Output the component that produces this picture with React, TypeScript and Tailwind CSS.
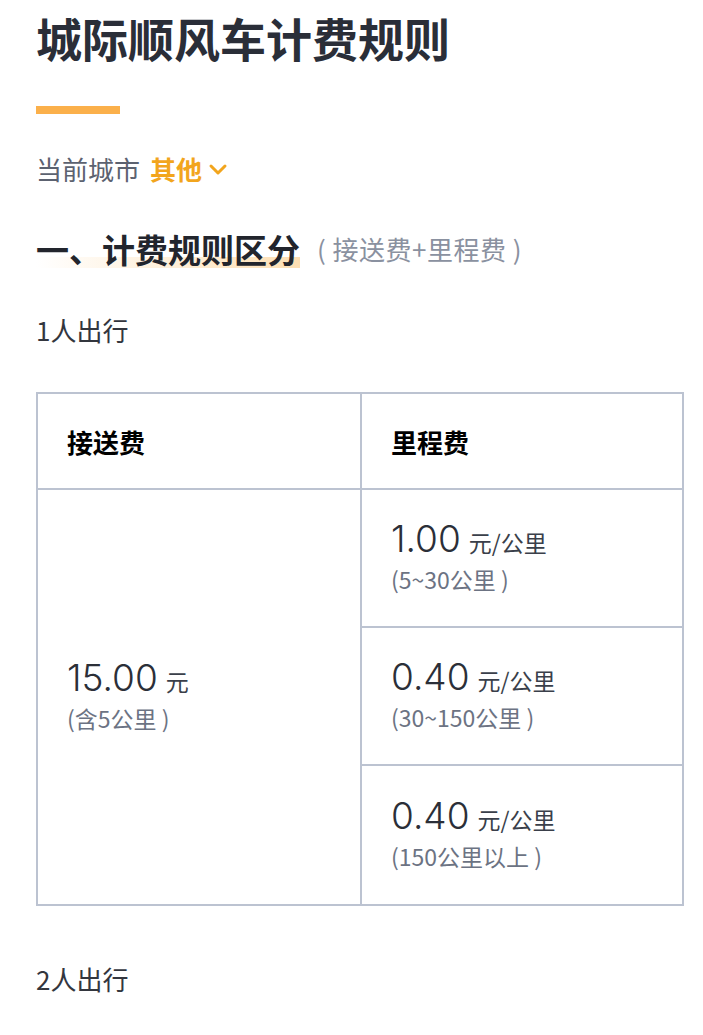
const FONT = '[font-family:"Noto_Sans_CJK_SC","Noto_Sans",sans-serif]';
const NUM = '[font-family:Inter,"Noto_Sans_CJK_SC",sans-serif]';

const MILEAGE = [
  { price: '1.00', range: '(5~30公里 )' },
  { price: '0.40', range: '(30~150公里 )' },
  { price: '0.40', range: '(150公里以上 )' },
];

function Price({ value, unit, note }: { value: string; unit: string; note: string }) {
  return (
    <div className="pb-[4px]">
      <div className="flex items-baseline">
        <span className={`${NUM} text-[37px] leading-[40px] font-light text-[#2b2f38]`}>{value}</span>
        <span className="ml-[8px] text-[23px] text-[#3a3f4a]">{unit}</span>
      </div>
      <div className="mt-[5px] text-[23px] leading-[28px] text-[#6c7383]">{note}</div>
    </div>
  );
}

export default function App() {
  return (
    <main className={`min-h-screen bg-white pl-[36px] pt-[9px] ${FONT}`}>
      <h1 className="text-[46px] leading-[56px] font-bold text-[#2a2e38]">城际顺风车计费规则</h1>
      <div className="mt-[41px] h-[8px] w-[84px] bg-[#fbb04b]" />

      {/* city */}
      <div className="mt-[39px] flex items-center text-[26px] leading-[32px]">
        <span className="text-[#5c6270]">当前城市</span>
        <span className="ml-[10px] font-bold text-[#f2a51d]">其他</span>
        <svg width="24" height="24" viewBox="0 0 24 24" className="ml-[4px]">
          <path d="M5 9l7 7 7-7" fill="none" stroke="#f2a51d" strokeWidth="3" strokeLinecap="round" strokeLinejoin="round" />
        </svg>
      </div>

      {/* section title */}
      <div className="mt-[44px] flex items-center">
        <div className="relative">
          <div className="absolute bottom-[1px] left-0 right-0 h-[11px] bg-gradient-to-r from-white to-[#fddfb3]" />
          <h2 className="relative text-[33px] leading-[40px] font-bold text-[#22252d]">一、计费规则区分</h2>
        </div>
        <span className="ml-[17px] text-[26px] leading-[32px] tracking-[0.5px] text-[#8a91a0]">( 接送费+里程费 )</span>
      </div>

      <div className="mt-[45px] text-[26px] leading-[32px] text-[#33363e]">1人出行</div>

      {/* table */}
      <div className="mt-[46px] w-[648px] border-2 border-[#bcc3d1] text-[#2b2f38]">
        <div className="grid grid-cols-[324px_1fr] border-b-2 border-[#bcc3d1]">
          <div className="flex h-[94px] items-center border-r-2 border-[#bcc3d1] pl-[29px] text-[26px] font-bold text-black">
            接送费
          </div>
          <div className="flex h-[94px] items-center pl-[29px] text-[26px] font-bold text-black">里程费</div>
        </div>
        <div className="grid grid-cols-[324px_1fr]">
          <div className="flex items-center border-r-2 border-[#bcc3d1] pl-[29px]">
            <Price value="15.00" unit="元" note="(含5公里 )" />
          </div>
          <div>
            {MILEAGE.map((m, i) => (
              <div
                key={i}
                className={`flex h-[138px] items-center pl-[29px] ${i < MILEAGE.length - 1 ? 'border-b-2 border-[#bcc3d1]' : ''}`}
              >
                <Price value={m.price} unit="元/公里" note={m.range} />
              </div>
            ))}
          </div>
        </div>
      </div>

      <div className="mt-[57px] text-[26px] leading-[32px] text-[#33363e]">2人出行</div>
    </main>
  );
}
